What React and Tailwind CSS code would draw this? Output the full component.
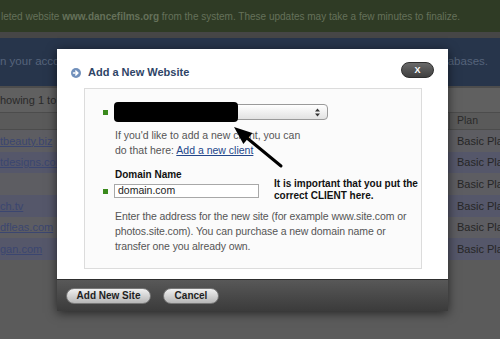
import React from 'react';

const rows = [
  { site: 'tbeauty.biz', bg: 'bg-[#5d5d62]', h: 'h-[22px]' },
  { site: 'tdesigns.com', bg: 'bg-[#55576a]', h: 'h-[21px]' },
  { site: '', bg: 'bg-[#5d5d62]', h: 'h-[22px]' },
  { site: 'ch.tv', bg: 'bg-[#55576a]', h: 'h-[22px]' },
  { site: 'dfleas.com', bg: 'bg-[#5d5d62]', h: 'h-[21px]' },
  { site: 'gan.com', bg: 'bg-[#55576a]', h: 'h-[22px]' },
];

function Square() {
  return <span className="block w-[5px] h-[5px] bg-[#3a8a1c] shrink-0" />;
}

export default function App() {
  return (
    <div className="relative w-[500px] h-[339px] overflow-hidden bg-[#5b5b5b] font-['Liberation_Sans',Arial,sans-serif]">
      {/* pagina de fondo, atenuada */}
      <div className="flex h-[32px] items-center bg-[#2f3b25] pl-[1px] text-[10px] text-[#65715a] whitespace-nowrap">
        leted website&nbsp;<b>www.dancefilms.org</b>&nbsp;from the system. These updates may take a few minutes to finalize.
      </div>
      <div className="h-[6px] bg-[#464646]" />
      <div className="flex h-[48px] items-center justify-between bg-[#27354b] text-[11.5px] text-[#56647b] whitespace-nowrap">
        <span>n your account, including websites, domains, email and</span>
        <span className="pr-[12px]">databases.</span>
      </div>
      <div className="h-[2px] bg-[#4d4d4d]" />
      <div className="flex h-[24px] items-center bg-[#606060] text-[11px] text-[#2a2a2a]">howing 1 to 6 of 6</div>
      <div className="flex h-[18px] border-y border-[#4c4c4c] bg-[#5a5a5a] text-[10.5px] text-[#2a2a2a]">
        <div className="flex-1" />
        <div className="w-[51px] border-l border-[#4c4c4c] pl-[7px] flex items-center">Plan</div>
      </div>
      {rows.map((r, i) => (
        <div key={i} className={`flex items-center ${r.h} ${r.bg} text-[11px]`}>
          <span className="flex-1 text-[#3b4670] underline">{r.site}</span>
          <span className="w-[51px] pl-[8px] text-[#262626] whitespace-nowrap">Basic Plan</span>
        </div>
      ))}

      {/* modal */}
      <div className="absolute left-[57px] top-[49px] w-[391px] shadow-[0_2px_10px_rgba(0,0,0,0.6)]">
        <div className="h-[230px] bg-white flex flex-col">
          <div className="flex h-[39px] pl-[14px] pr-[14px]">
            <div className="flex items-center pt-[8px] gap-[7px]">
              <svg width="10" height="10" viewBox="0 0 10 10">
                <circle cx="5" cy="5" r="5" fill="#7190bb" />
                <path d="M2.5 5h4M4.8 3L6.9 5 4.8 7" stroke="#fff" strokeWidth="1.6" fill="none" strokeLinecap="round" strokeLinejoin="round" />
              </svg>
              <span className="text-[11px] font-bold text-[#2e4466]">Add a New Website</span>
            </div>
            <button className="ml-auto mt-[13px] w-[33px] h-[16px] rounded-full border border-[#2e2e2e] bg-gradient-to-b from-[#6a6a6a] to-[#3f3f3f] text-white text-[9px] font-bold leading-none">
              X
            </button>
          </div>

          <div className="ml-[27px] mr-[26px] h-[181px] border border-[#dcdcdc] bg-[#fbfbfb] pl-[18px] pt-[15px] text-[10.5px] text-[#555]">
            <div className="flex items-center gap-[6px]">
              <Square />
              <div className="relative w-[214px] h-[16px] rounded-[4px] border border-[#9a9a9a] bg-gradient-to-b from-white to-[#e2e2e2] flex items-center justify-end pr-[7px]">
                <svg width="5" height="9" viewBox="0 0 5 9">
                  <path d="M0 3.5L2.5 0.5 5 3.5zM0 5.5L2.5 8.5 5 5.5z" fill="#333" />
                </svg>
                <div className="absolute left-[-1px] top-[-3px] w-[124px] h-[20px] rounded-[4px] bg-black" />
              </div>
            </div>
            <div className="ml-[12px] mt-[8px] leading-[15px]">
              <div>If you'd like to add a new client, you can</div>
              <div>
                do that here: <span className="text-[#23468a] underline">Add a new client</span>
              </div>
            </div>
            <div className="ml-[12px] mt-[10px] leading-[14px] text-[10px] font-bold text-[#111]">Domain Name</div>
            <div className="flex items-start mt-[2px]">
              <div className="flex items-center gap-[6px] h-[14px]">
                <Square />
                <div className="w-[145px] h-[14px] border border-[#a8a8a8] bg-white pl-[3px] flex items-center text-[10.5px] text-[#222]">
                  domain.com
                </div>
              </div>
              <div className="ml-[15px] -mt-[6px] text-[10px] leading-[11.5px] font-bold text-[#111]">
                It is important that you put the
                <br />
                correct CLIENT here.
              </div>
            </div>
            <div className="ml-[12px] mt-[8px] leading-[15px] tracking-[-0.1px]">
              <div>Enter the address for the new site (for example www.site.com or</div>
              <div>photos.site.com). You can purchase a new domain name or</div>
              <div>transfer one you already own.</div>
            </div>
          </div>
        </div>
        <div className="h-[32px] border-t border-[#2e2e2e] bg-gradient-to-b from-[#585858] to-[#3b3b3b] flex items-center gap-[12px] pl-[9px]">
          <button className="w-[85px] h-[16px] rounded-full border border-[#777] bg-gradient-to-b from-[#f0f0f0] to-[#b6b6b6] text-[10px] font-bold text-[#1e1e1e] leading-none">
            Add New Site
          </button>
          <button className="w-[56px] h-[16px] rounded-full border border-[#777] bg-gradient-to-b from-[#f0f0f0] to-[#b6b6b6] text-[10px] font-bold text-[#1e1e1e] leading-none">
            Cancel
          </button>
        </div>
      </div>

      {/* flecha de anotacion */}
      <svg className="absolute left-0 top-0 pointer-events-none" width="500" height="339">
        <line x1="281" y1="166" x2="247" y2="138" stroke="#000" strokeWidth="3" strokeLinecap="round" />
        <polygon points="234,127 252.4,133.1 243.4,143.9" fill="#000" />
      </svg>
    </div>
  );
}
